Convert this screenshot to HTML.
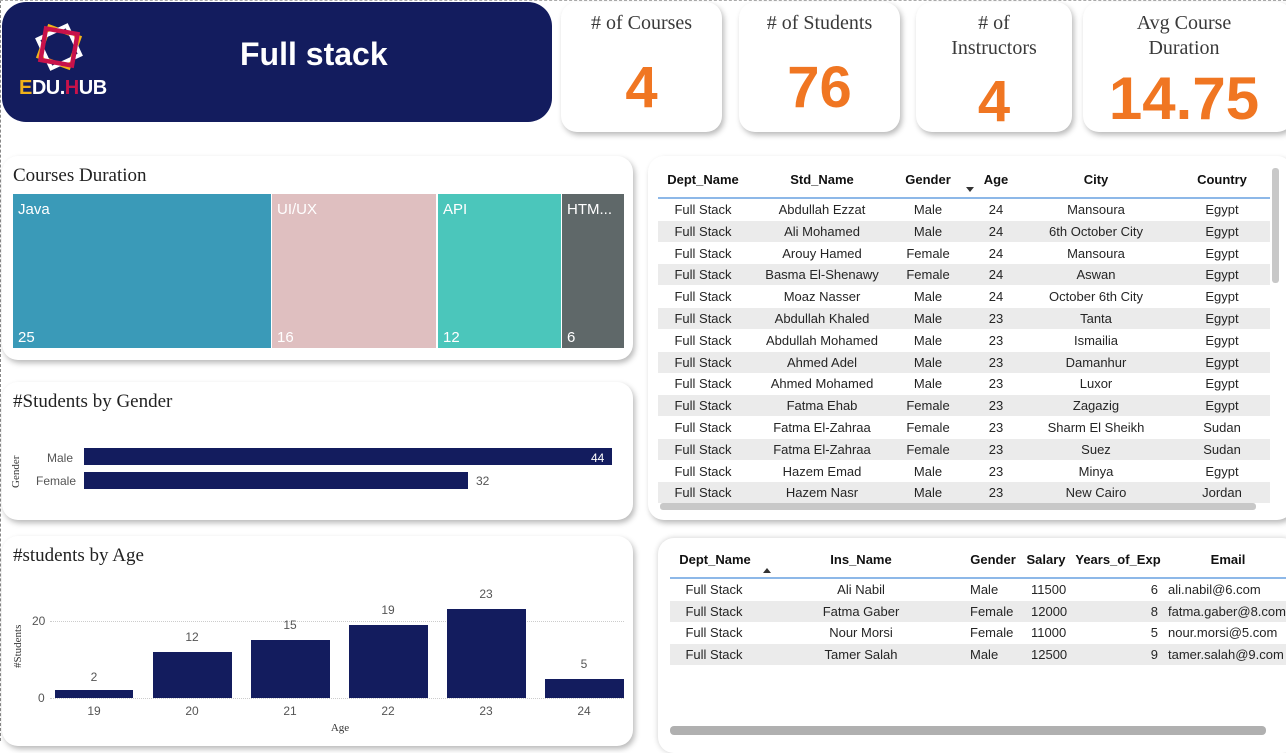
<!DOCTYPE html>
<html><head><meta charset="utf-8"><style>
*{margin:0;padding:0;box-sizing:border-box}
html,body{width:1286px;height:741px}
body{background:#fff;position:relative;overflow:hidden;font-family:"Liberation Sans",sans-serif}
.a{position:absolute}
.card{position:absolute;background:#fff;border-radius:16px;box-shadow:2px 3px 6px rgba(0,0,0,.28)}
.kt{position:absolute;left:0;right:0;text-align:center;font-family:"Liberation Serif",serif;font-size:20px;color:#3a3a3a;line-height:25px}
.kv{position:absolute;left:0;right:0;text-align:center;font-weight:bold;color:#f07622;font-size:58px}
.tt{position:absolute;font-family:"Liberation Serif",serif;font-size:19px;color:#222}
.c{position:absolute;transform:translateX(-50%);white-space:nowrap;font-size:13px;color:#252525}
.h{font-weight:bold;color:#111}
.row{position:absolute;height:21px}
.g{background:#ebebeb}
.lab{position:absolute;font-size:12px;color:#555;transform:translateX(-50%)}
</style></head><body>
<div class="a" style="left:0;top:0;width:1px;height:741px;border-left:1px dashed #888"></div>
<div class="a" style="left:0;top:0;width:1286px;height:1px;border-top:1px dashed #aaa"></div>
<!-- header -->
<div class="a" style="left:2px;top:2px;width:550px;height:120px;background:#131c5e;border-radius:24px"></div>
<svg class="a" style="left:30px;top:18px" width="60" height="60" viewBox="0 0 60 60">
<rect x="13" y="13" width="32" height="32" fill="none" stroke="#f0b21a" stroke-width="4" transform="rotate(20 29 29)"/>
<rect x="13" y="13" width="32" height="32" fill="none" stroke="#fff" stroke-width="4" transform="rotate(-25 29 29)"/>
<rect x="13" y="13" width="32" height="32" fill="none" stroke="#c8124a" stroke-width="4.5" transform="rotate(10 29 29)"/>
</svg>
<div class="a" style="left:19px;top:77px;font-size:20px;font-weight:bold;color:#fff;letter-spacing:-0.5px"><span style="color:#f0b21a">E</span>DU.<span style="color:#c8124a">H</span>UB</div>
<div class="a" style="left:240px;top:36px;font-size:32px;font-weight:bold;color:#fff">Full stack</div>
<!-- KPIs -->
<div class="card" style="left:561px;top:2px;width:161px;height:130px"><div class="kt" style="top:9px"># of Courses</div><div class="kv" style="top:52px">4</div></div>
<div class="card" style="left:739px;top:2px;width:161px;height:130px"><div class="kt" style="top:9px"># of Students</div><div class="kv" style="top:52px">76</div></div>
<div class="card" style="left:916px;top:2px;width:156px;height:130px"><div class="kt" style="top:9px"># of<br>Instructors</div><div class="kv" style="top:66px">4</div></div>
<div class="card" style="left:1083px;top:2px;width:210px;height:130px"><div class="kt" style="top:9px;right:8px">Avg Course<br>Duration</div><div class="kv" style="top:62px;right:8px;font-size:60px">14.75</div></div>
<!-- Courses duration -->
<div class="card" style="left:2px;top:156px;width:631px;height:204px"></div>
<div class="tt" style="left:13px;top:165px">Courses Duration</div>
<div class="a" style="left:13px;top:194px;width:258px;height:154px;background:#3a9ab8"></div>
<div class="a" style="left:272px;top:194px;width:164px;height:154px;background:#dfbfc0"></div>
<div class="a" style="left:438px;top:194px;width:123px;height:154px;background:#4bc6bb"></div>
<div class="a" style="left:562px;top:194px;width:62px;height:154px;background:#5f6869"></div>
<div class="a" style="left:18px;top:201px;color:#fff;font-size:15px">Java</div><div class="a" style="left:18px;top:329px;color:#fff;font-size:15px">25</div>
<div class="a" style="left:277px;top:201px;color:#fff;font-size:15px">UI/UX</div><div class="a" style="left:277px;top:329px;color:#fff;font-size:15px">16</div>
<div class="a" style="left:443px;top:201px;color:#fff;font-size:15px">API</div><div class="a" style="left:443px;top:329px;color:#fff;font-size:15px">12</div>
<div class="a" style="left:567px;top:201px;color:#fff;font-size:15px">HTM...</div><div class="a" style="left:567px;top:329px;color:#fff;font-size:15px">6</div>
<!-- gender -->
<div class="card" style="left:2px;top:382px;width:631px;height:138px"></div>
<div class="tt" style="left:13px;top:391px">#Students by Gender</div>
<div class="a" style="left:10px;top:488px;transform:rotate(-90deg);transform-origin:0 0;font-family:'Liberation Serif',serif;font-size:11px;color:#333">Gender</div>
<div class="a" style="left:47px;top:451px;font-size:12px;color:#555">Male</div>
<div class="a" style="left:36px;top:474px;font-size:12px;color:#555">Female</div>
<div class="a" style="left:84px;top:448px;width:528px;height:17px;background:#131c5e"></div>
<div class="a" style="left:84px;top:472px;width:384px;height:17px;background:#131c5e"></div>
<div class="a" style="left:591px;top:451px;font-size:12px;color:#fff">44</div>
<div class="a" style="left:476px;top:474px;font-size:12px;color:#555">32</div>
<!-- age -->
<div class="card" style="left:2px;top:536px;width:631px;height:210px"></div>
<div class="tt" style="left:13px;top:545px">#students by Age</div>
<div class="a" style="left:50px;top:621px;width:574px;border-top:1px dotted #ccc"></div>
<div class="a" style="left:50px;top:698px;width:574px;border-top:1px dotted #ccc"></div>
<div class="a" style="left:32px;top:614px;font-size:12px;color:#555">20</div>
<div class="a" style="left:38px;top:691px;font-size:12px;color:#555">0</div>
<div class="a" style="left:12px;top:668px;transform:rotate(-90deg);transform-origin:0 0;font-family:'Liberation Serif',serif;font-size:11px;color:#333">#Students</div>
<div class="a" style="left:55px;top:690px;width:78px;height:8px;background:#131c5e"></div>
<div class="a" style="left:153px;top:652px;width:79px;height:46px;background:#131c5e"></div>
<div class="a" style="left:251px;top:640px;width:79px;height:58px;background:#131c5e"></div>
<div class="a" style="left:349px;top:625px;width:79px;height:73px;background:#131c5e"></div>
<div class="a" style="left:447px;top:609px;width:79px;height:89px;background:#131c5e"></div>
<div class="a" style="left:545px;top:679px;width:79px;height:19px;background:#131c5e"></div>
<div class="lab" style="left:94px;top:670px">2</div><div class="lab" style="left:192px;top:630px">12</div><div class="lab" style="left:290px;top:618px">15</div><div class="lab" style="left:388px;top:603px">19</div><div class="lab" style="left:486px;top:587px">23</div><div class="lab" style="left:584px;top:657px">5</div>
<div class="lab" style="left:94px;top:704px">19</div><div class="lab" style="left:192px;top:704px">20</div><div class="lab" style="left:290px;top:704px">21</div><div class="lab" style="left:388px;top:704px">22</div><div class="lab" style="left:486px;top:704px">23</div><div class="lab" style="left:584px;top:704px">24</div>
<div class="lab" style="left:340px;top:722px;font-family:'Liberation Serif',serif;font-size:11px;color:#333">Age</div>
<!-- student table -->
<div class="card" style="left:648px;top:156px;width:645px;height:364px"></div>
<div class="a" style="left:658px;top:197px;width:612px;border-top:2px solid #8db8e8"></div>
<div class="a" style="left:1272px;top:168px;width:7px;height:115px;background:#c8c8c8;border-radius:3px"></div>
<div class="a" style="left:660px;top:503px;width:596px;height:7px;background:#c8c8c8;border-radius:3px"></div>
<div class="a" style="left:966px;top:187px;width:0;height:0;border-left:4px solid transparent;border-right:4px solid transparent;border-top:5px solid #333"></div>
<div id="st"></div>
<!-- instructor table -->
<div class="card" style="left:658px;top:538px;width:640px;height:215px;box-shadow:0 0 6px rgba(0,0,0,.2)"></div>
<div class="a" style="left:670px;top:577px;width:620px;border-top:2px solid #8db8e8"></div>
<div class="a" style="left:763px;top:568px;width:0;height:0;border-left:4px solid transparent;border-right:4px solid transparent;border-bottom:5px solid #333"></div>
<div class="a" style="left:670px;top:726px;width:596px;height:9px;background:#b0b0b0;border-radius:4px"></div>
<div id="it"></div>
<script>
var S=[["Abdullah Ezzat","Male",24,"Mansoura","Egypt"],["Ali Mohamed","Male",24,"6th October City","Egypt"],["Arouy Hamed","Female",24,"Mansoura","Egypt"],["Basma El-Shenawy","Female",24,"Aswan","Egypt"],["Moaz Nasser","Male",24,"October 6th City","Egypt"],["Abdullah Khaled","Male",23,"Tanta","Egypt"],["Abdullah Mohamed","Male",23,"Ismailia","Egypt"],["Ahmed Adel","Male",23,"Damanhur","Egypt"],["Ahmed Mohamed","Male",23,"Luxor","Egypt"],["Fatma Ehab","Female",23,"Zagazig","Egypt"],["Fatma El-Zahraa","Female",23,"Sharm El Sheikh","Sudan"],["Fatma El-Zahraa","Female",23,"Suez","Sudan"],["Hazem Emad","Male",23,"Minya","Egypt"],["Hazem Nasr","Male",23,"New Cairo","Jordan"]];
var X=[703,822,928,996,1096,1222],h='';
["Dept_Name","Std_Name","Gender","Age","City","Country"].forEach(function(t,i){h+='<div class="c h" style="left:'+X[i]+'px;top:172px">'+t+'</div>'});
S.forEach(function(r,j){var y=198+j*21.8;if(j%2)h+='<div class="row g" style="left:658px;top:'+(y+1)+'px;width:612px"></div>';var v=["Full Stack"].concat(r);v.forEach(function(t,i){h+='<div class="c" style="left:'+X[i]+'px;top:'+(y+4)+'px">'+t+'</div>'})});
document.getElementById('st').outerHTML=h;
var I=[["Ali Nabil","Male",11500,6,"ali.nabil@6.com"],["Fatma Gaber","Female",12000,8,"fatma.gaber@8.com"],["Nour Morsi","Female",11000,5,"nour.morsi@5.com"],["Tamer Salah","Male",12500,9,"tamer.salah@9.com"]];
h='<div class="a" style="left:670px;top:538px;width:616px;height:203px;overflow:hidden"><div style="position:relative;left:-670px;top:-538px">';
[["Dept_Name",715],["Ins_Name",861],["Gender",993],["Salary",1046],["Years_of_Exp",1118],["Email",1228]].forEach(function(a){h+='<div class="c h" style="left:'+a[1]+'px;top:552px">'+a[0]+'</div>'});
I.forEach(function(r,j){var y=578+j*21.6;if(j%2)h+='<div class="row g" style="left:670px;top:'+(y+1)+'px;width:620px"></div>';
h+='<div class="c" style="left:714px;top:'+(y+4)+'px">Full Stack</div><div class="c" style="left:861px;top:'+(y+4)+'px">'+r[0]+'</div>';
h+='<div class="c" style="left:970px;transform:none;top:'+(y+4)+'px">'+r[1]+'</div><div class="c" style="left:1031px;transform:none;top:'+(y+4)+'px">'+r[2]+'</div>';
h+='<div class="c" style="left:1158px;transform:translateX(-100%);top:'+(y+4)+'px">'+r[3]+'</div><div class="c" style="left:1168px;transform:none;top:'+(y+4)+'px">'+r[4]+'</div>'});
h+='</div></div>';
document.getElementById('it').outerHTML=h;
</script>
</body></html>
